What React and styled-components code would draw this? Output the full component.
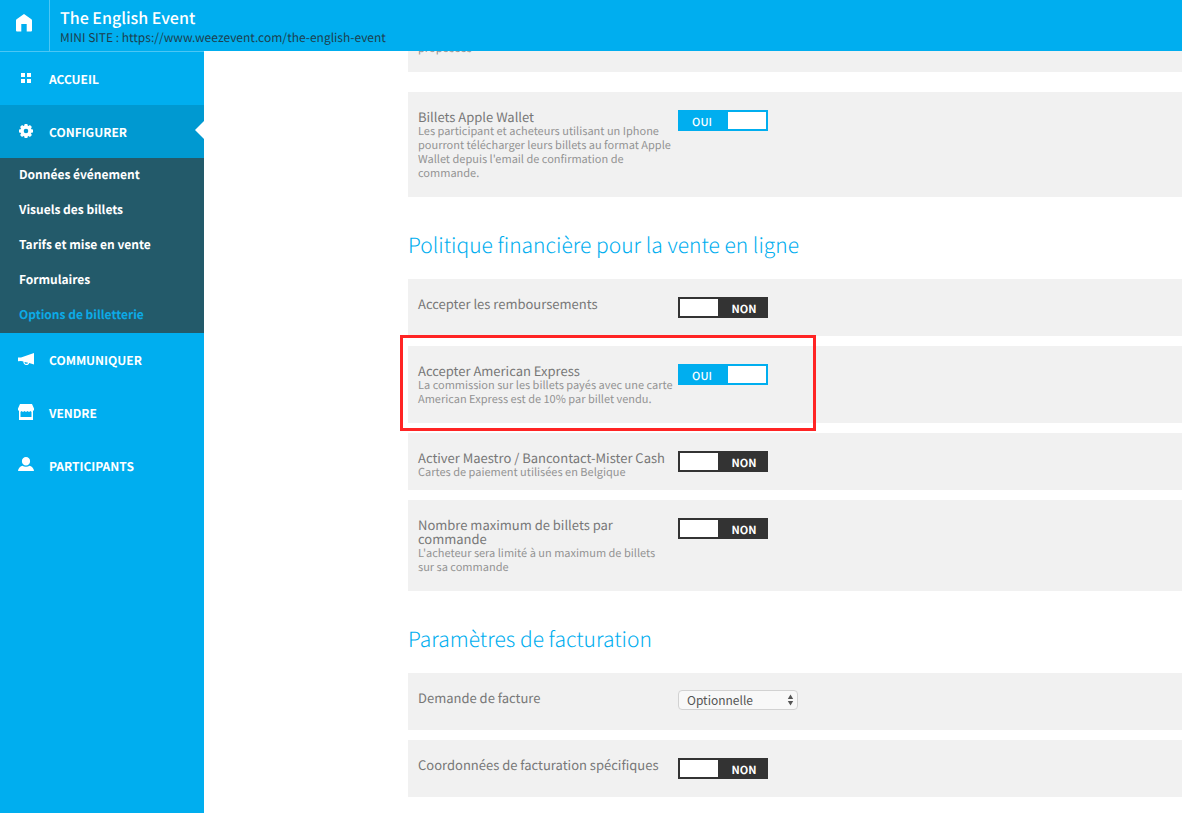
import React, { useState } from "react";
import styled, { createGlobalStyle } from "styled-components";

const blue = "#00aeef";

const GlobalStyle = createGlobalStyle`
  * { box-sizing: border-box; }
  body {
    margin: 0;
    background: #fff;
    color: #777;
    font-family: "Noto Sans CJK SC", "Noto Sans", sans-serif;
    font-size: 13px;
    line-height: 14px;
    text-rendering: geometricPrecision;
  }
`;

const Header = styled.header`
  position: fixed;
  top: 0;
  left: 0;
  right: 0;
  z-index: 10;
  display: flex;
  height: 51px;
  background: ${blue};
`;

const HomeLink = styled.a`
  display: flex;
  width: 50px;
  padding: 14px 16px 0;
  border-right: 1px solid #4cc6f4;
`;

const EventInfo = styled.div`
  padding: 7px 10px 0;
`;

const EventTitle = styled.h1`
  margin: 0;
  color: #fff;
  font-size: 16px;
  font-weight: 500;
  line-height: 20px;
`;

const EventUrl = styled.p`
  margin: 0;
  color: #1c3f4e;
  font-size: 12px;
  line-height: 22px;
`;

const Page = styled.div`
  display: flex;
  min-height: 100vh;
`;

const Sidebar = styled.nav`
  flex: 0 0 204px;
  padding-top: 51px;
  background: ${blue};
`;

const MenuItem = styled.a`
  position: relative;
  display: flex;
  align-items: center;
  gap: 14px;
  height: 53px;
  padding: 0 17px;
  background: ${(p) => (p.$active ? "#0099d1" : "transparent")};
  color: #fff;
  font-size: 12px;
  font-weight: 700;
  text-decoration: none;

  svg {
    flex: none;
    margin-bottom: 2px;
  }
  span {
    padding-top: 3px;
  }
`;

const MenuTop = styled.div`
  border-top: 1px solid #4cc6f4;
`;

const Pointer = styled.i`
  position: absolute;
  right: 0;
  top: 16px;
  border: 9px solid transparent;
  border-right-color: #fff;
  border-left: 0;
`;

const SubMenu = styled.div`
  background: #235a6a;
`;

const SubItem = styled.a`
  display: flex;
  align-items: center;
  height: 35px;
  padding: 0 19px 2px;
  color: ${(p) => (p.$current ? "#0caae6" : "#fff")};
  font-size: 12px;
  font-weight: 700;
  text-decoration: none;
`;

const Main = styled.main`
  flex: 1;
  min-width: 0;
  padding: 15px 0 16px 204px;
`;

const Section = styled.section`
  display: flex;
  flex-direction: column;
  gap: ${(p) => (p.$loose ? "20px" : "10px")};
`;

const SectionTitle = styled.h2`
  margin: 33px 0 9px;
  color: ${blue};
  font-size: 21px;
  font-weight: 300;
  line-height: 30px;
`;

const Row = styled.div`
  position: relative;
  display: flex;
  align-items: flex-start;
  min-height: 57px;
  padding: ${(p) => (p.$continued ? "26px" : "18px")} 10px ${(p) => (p.$tight ? "11px" : "17px")};
  background: #f1f1f1;
`;

const RowText = styled.div`
  flex: 0 0 260px;
  padding-right: 2px;
`;

const RowLabel = styled.label`
  display: block;
`;

const Description = styled.p`
  margin: 0;
  color: #939393;
  font-size: 11px;
`;

const Highlight = styled.div`
  position: absolute;
  top: -11px;
  bottom: -8px;
  left: -8px;
  width: 416px;
  border: 3px solid #ff2424;
  pointer-events: none;
`;

const Switch = styled.span`
  position: relative;
  display: flex;
  flex-direction: ${(p) => (p.$on ? "row" : "row-reverse")};
  width: 90px;
  height: 21px;
  background: ${(p) => (p.$on ? blue : "#333")};
`;

const SwitchInput = styled.input`
  position: absolute;
  inset: 0;
  width: 100%;
  height: 100%;
  margin: 0;
  opacity: 0;
  cursor: pointer;
`;

const SwitchText = styled.span`
  flex: 1;
  padding-top: 2px;
  color: #fff;
  font-size: 11px;
  font-weight: ${(p) => (p.$on ? 500 : 700)};
  line-height: 20px;
  text-align: center;
`;

const Knob = styled.span`
  width: 38px;
  margin: 2px;
  background: #fff;
`;

const SelectBox = styled.span`
  position: relative;
  display: block;
  width: 120px;
  height: 20px;
  margin-top: -1px;

  svg {
    position: absolute;
    top: 4px;
    right: 4px;
    pointer-events: none;
  }
`;

const Select = styled.select`
  appearance: none;
  display: block;
  width: 100%;
  height: 20px;
  padding: 0 8px 1px;
  border: 1px solid #d2d2d2;
  border-radius: 4px;
  background: #f8f8f8;
  color: #555;
  font-family: inherit;
  font-size: 12px;
  line-height: 18px;
`;

const HomeIcon = () => (
  <svg width="16" height="18" viewBox="0 0 16 18" fill="#fff">
    <path d="M8 0 L15.4 5.2 Q16 5.7 16 6.5 V16.500 Q16 17.500 15 17.500 H10.700 V10 H5.300 V17.500 H1 Q0 17.500 0 16.500 V6.5 Q0 5.7 .6 5.2 Z" />
  </svg>
);

const gearTeeth = [0, 45, 90, 135, 180, 225, 270, 315];

const icons = {
  grid: <path d="M4 4h4v4H4zM10 4h4v4h-4zM4 10h4v4H4zM10 10h4v4h-4z" />,
  gear: (
    <>
      <circle cx="9" cy="9" r="4" fill="none" stroke="#fff" strokeWidth="3.400" />
      {gearTeeth.map((angle) => (
        <path
          key={angle}
          d="M7.200 4.500 L7.600 2 H10.400 L10.800 4.500 Z"
          transform={`rotate(${angle} 9 9)`}
        />
      ))}
    </>
  ),
  megaphone: (
    <path d="M17 3v11.500l-4.800-1.500c-.5 1.700-1.800 2.300-3.400 1.900-1.600-.4-2.600-1.600-2.400-3.400L4 10.900 1 11.200V7.400L4 7.500zM7.600 11.900c-.1 1.100.4 1.700 1.400 1.900 1 .2 1.800-.2 2.100-1.100z" />
  ),
  shop: (
    <path
      fillRule="evenodd"
      d="M3 1h12l2 4.500V7l-1 1v9H2V8L1 7V5.500zM3.500 9v5h11V9l-1-1-1.500 1-1.500-1L9 9 7.500 8 6 9 4.500 8z"
    />
  ),
  person: (
    <path d="M9 1a4.100 4.100 0 0 1 4.100 4.200A4.100 4.300 0 0 1 9 9.500 4.100 4.300 0 0 1 4.900 5.200 4.100 4.100 0 0 1 9 1zM1 15c.2-2.500 1.800-4.700 4.400-5.300C7.300 11 10.700 11 12.600 9.700 15.200 10.300 16.800 12.500 17 15z" />
  ),
};

const MenuIcon = ({ name }) => (
  <svg width="18" height="18" viewBox="0 0 18 18" fill="#fff" aria-hidden="true">
    {icons[name]}
  </svg>
);

function MenuLink({ icon, children, active }) {
  return (
    <MenuItem href="#" $active={active}>
      <MenuIcon name={icon} />
      <span>{children}</span>
      {active && <Pointer />}
    </MenuItem>
  );
}

function Toggle({ id, initial }) {
  const [on, setOn] = useState(initial);
  return (
    <Switch $on={on}>
      <SwitchText $on={on}>{on ? "OUI" : "NON"}</SwitchText>
      <Knob />
      <SwitchInput id={id} type="checkbox" checked={on} onChange={(e) => setOn(e.target.checked)} />
    </Switch>
  );
}

function OptionRow({ id, label, description, on = false, tight, highlighted, children }) {
  return (
    <Row $tight={tight}>
      <RowText>
        <RowLabel htmlFor={id}>{label}</RowLabel>
        {description && <Description>{description}</Description>}
      </RowText>
      {children || <Toggle id={id} initial={on} />}
      {highlighted && <Highlight />}
    </Row>
  );
}

const subItems = [
  "Données événement",
  "Visuels des billets",
  "Tarifs et mise en vente",
  "Formulaires",
  "Options de billetterie",
];

export default function App() {
  return (
    <>
      <GlobalStyle />
      <Header>
        <HomeLink href="#" aria-label="Accueil">
          <HomeIcon />
        </HomeLink>
        <EventInfo>
          <EventTitle>The English Event</EventTitle>
          <EventUrl>MINI SITE : https://www.weezevent.com/the-english-event</EventUrl>
        </EventInfo>
      </Header>
      <Page>
        <Sidebar>
          <MenuTop>
            <MenuLink icon="grid">ACCUEIL</MenuLink>
          </MenuTop>
          <MenuLink icon="gear" active>CONFIGURER</MenuLink>
          <SubMenu>
            {subItems.map((item, i) => (
              <SubItem href="#" key={item} $current={i === subItems.length - 1}>
                {item}
              </SubItem>
            ))}
          </SubMenu>
          <MenuLink icon="megaphone">COMMUNIQUER</MenuLink>
          <MenuLink icon="shop">VENDRE</MenuLink>
          <MenuLink icon="person">PARTICIPANTS</MenuLink>
        </Sidebar>
        <Main>
          <Section $loose>
            <Row $continued>
              <RowText>
                <Description>proposées</Description>
              </RowText>
            </Row>
            <OptionRow
              id="wallet"
              label="Billets Apple Wallet"
              description="Les participant et acheteurs utilisant un Iphone pourront télécharger leurs billets au format Apple Wallet depuis l'email de confirmation de commande."
              on
            />
          </Section>
          <Section>
            <SectionTitle>Politique financière pour la vente en ligne</SectionTitle>
            <OptionRow id="refunds" label="Accepter les remboursements" />
            <OptionRow
              id="amex"
              label="Accepter American Express"
              description="La commission sur les billets payés avec une carte American Express est de 10% par billet vendu."
              on
              highlighted
            />
            <OptionRow
              id="maestro"
              label="Activer Maestro / Bancontact-Mister Cash"
              description="Cartes de paiement utilisées en Belgique"
              tight
            />
            <OptionRow
              id="maximum"
              label="Nombre maximum de billets par commande"
              description={"L'acheteur sera limité à un maximum de billets sur\u00a0sa commande"}
            />
          </Section>
          <Section>
            <SectionTitle>Paramètres de facturation</SectionTitle>
            <OptionRow id="invoice" label="Demande de facture">
              <SelectBox>
                <Select id="invoice" defaultValue="Optionnelle">
                  <option>Optionnelle</option>
                </Select>
                <svg width="7" height="12" viewBox="0 0 7 12" fill="#555" aria-hidden="true">
                  <path d="M3.500 0.500 6.200 5H.8zM3.500 11.500.8 7H6.200z" />
                </svg>
              </SelectBox>
            </OptionRow>
            <OptionRow id="details" label="Coordonnées de facturation spécifiques" />
          </Section>
        </Main>
      </Page>
    </>
  );
}
